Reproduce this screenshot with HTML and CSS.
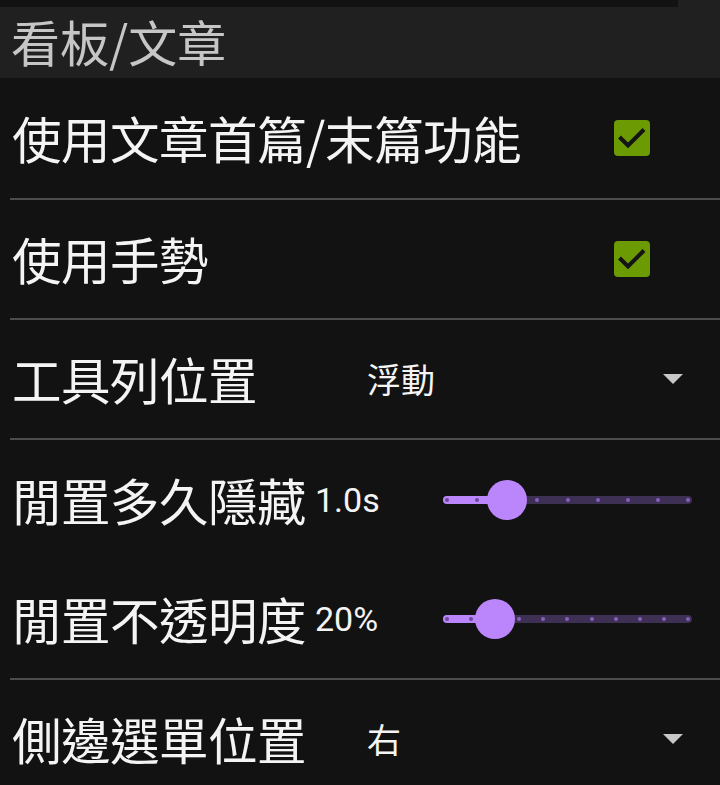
FILE: index.html
```html
<!DOCTYPE html>
<html lang="zh-Hant">
<head>
<meta charset="utf-8">
<title>看板/文章</title>
<link rel="stylesheet" href="styles.css">
</head>
<body>
<div class="top"><div class="top-dark"></div></div>
<div class="header">看板/文章</div>
<div class="list">
  <div class="row first">
    <div class="label">使用文章首篇/末篇功能</div>
    <div class="checkbox"><svg viewBox="0 0 36 36" width="36" height="36"><path d="M5.5 17 L14 25.5 L30 9.5" fill="none" stroke="#141414" stroke-width="4"/></svg></div>
  </div>
  <div class="row">
    <div class="label">使用手勢</div>
    <div class="checkbox"><svg viewBox="0 0 36 36" width="36" height="36"><path d="M5.5 17 L14 25.5 L30 9.5" fill="none" stroke="#141414" stroke-width="4"/></svg></div>
  </div>
  <div class="row">
    <div class="label">工具列位置</div>
    <div class="select"><span class="value">浮動</span><span class="arrow"></span></div>
  </div>
  <div class="row slider-row noborder">
    <div class="label">閒置多久隱藏</div>
    <div class="num">1.0s</div>
    <div class="slider" style="--v:0.25">
      <div class="track"></div>
      <div class="active"></div>
      <div class="ticks"><i class="on"></i><i class="on"></i><i></i><i></i><i></i><i></i><i></i><i></i><i></i></div>
      <div class="thumb"></div>
    </div>
  </div>
  <div class="row slider-row">
    <div class="label">閒置不透明度</div>
    <div class="num">20%</div>
    <div class="slider" style="--v:0.2">
      <div class="track"></div>
      <div class="active"></div>
      <div class="ticks"><i class="on"></i><i class="on"></i><i></i><i></i><i></i><i></i><i></i><i></i><i></i><i></i><i></i></div>
      <div class="thumb"></div>
    </div>
  </div>
  <div class="row">
    <div class="label">側邊選單位置</div>
    <div class="select"><span class="value">右</span><span class="arrow"></span></div>
  </div>
</div>
</body>
</html>
```

FILE: styles.css
```css
html, body {
  margin: 0;
  padding: 0;
  background: #121212;
}
body {
  width: 720px;
  height: 785px;
  overflow: hidden;
  font-family: Roboto, "Noto Sans CJK TC", sans-serif;
  color: #f4f4f4;
}
.top {
  height: 7px;
  background: #202020;
  display: flex;
}
.top-dark {
  width: 678px;
  background: #121212;
}
.header {
  background: #202020;
  color: #c6c6c6;
  font-family: "Noto Sans CJK TC", sans-serif;
  font-size: 49px;
  line-height: 71px;
  padding-left: 11px;
  box-sizing: border-box;
  margin-top: -2px;
  height: 73px;
}
.list {
  display: flex;
  flex-direction: column;
}
.row {
  position: relative;
  height: 120px;
  margin-left: 10px;
  padding-left: 2px;
  border-bottom: 2px solid #4c4c4c;
  display: flex;
  align-items: center;
  box-sizing: border-box;
}
.row.first {
  height: 122px;
}
.row.noborder {
  border-bottom: none;
}
.label {
  font-family: "Noto Sans CJK TC", sans-serif;
  font-size: 49.5px;
  line-height: 1;
  white-space: nowrap;
  letter-spacing: -0.5px;
}
.checkbox {
  margin-left: auto;
  margin-right: 70px;
  width: 36px;
  height: 36px;
  border-radius: 4px;
  background: #6b9a02;
  display: flex;
}
.checkbox svg {
  display: block;
  flex: none;
}
.select {
  position: absolute;
  left: 357px;
  right: 37px;
  display: flex;
  align-items: center;
}
.value {
  font-family: "Noto Sans CJK TC", sans-serif;
  font-size: 34px;
  line-height: 1;
}
.arrow {
  margin-left: auto;
  width: 0;
  height: 0;
  border-left: 10px solid transparent;
  border-right: 10px solid transparent;
  border-top: 10px solid #c8c8c8;
}
.num {
  font-size: 34px;
  margin-left: 9px;
  line-height: 1;
}
.slider {
  position: absolute;
  left: 433px;
  width: 249px;
  height: 40px;
  top: 50%;
  margin-top: -20px;
}
.track {
  position: absolute;
  left: 0;
  right: 0;
  top: 16px;
  height: 8px;
  border-radius: 4px;
  background: #3e2f55;
}
.active {
  position: absolute;
  left: 0;
  top: 16px;
  height: 8px;
  border-radius: 4px;
  width: calc(4px + var(--v) * (100% - 8px));
  background: #bb86fc;
}
.ticks {
  position: absolute;
  left: 2px;
  right: 2px;
  top: 18px;
  height: 4px;
  display: flex;
  justify-content: space-between;
}
.ticks i {
  width: 4px;
  height: 4px;
  border-radius: 50%;
  background: #8660b8;
}
.ticks i.on {
  background: #6c4a98;
}
.thumb {
  position: absolute;
  top: 0;
  left: calc(4px + var(--v) * (100% - 8px));
  width: 40px;
  height: 40px;
  margin-left: -20px;
  border-radius: 50%;
  background: #bb86fc;
}
```
